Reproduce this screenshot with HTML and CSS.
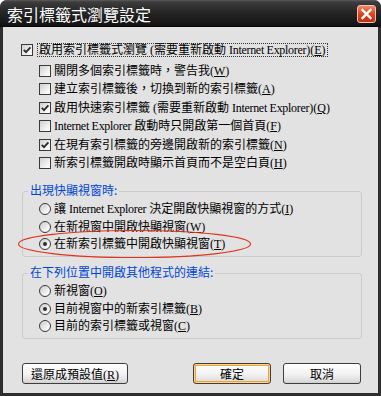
FILE: index.html
```html
<!DOCTYPE html>
<html lang="zh-Hant">
<head>
<meta charset="utf-8">
<title>索引標籤式瀏覽設定</title>
<link rel="stylesheet" href="styles.css">
</head>
<body>
<div class="window">
  <div class="titlebar">
    <span class="title">索引標籤式瀏覽設定</span>
    <span class="close"><svg width="13" height="12" viewBox="0 0 13 12"><path d="M2.5 2 L10.5 10 M10.5 2 L2.5 10" stroke="#fff" stroke-width="2.4" stroke-linecap="square"/></svg></span>
  </div>
  <div class="client">
    <div class="row top">
      <span class="cb"><svg width="10" height="10" viewBox="0 0 10 10"><path d="M1.8 4.8 L4 7.2 L8.4 2.4" fill="none" stroke="#2a2a2a" stroke-width="1.8"/></svg></span>
      <span class="label focus">啟用索引標籤式瀏覽 (需要重新啟動 <span class="lat">Internet Explorer</span>)(<u>E</u>)</span>
    </div>
    <div class="sub">
      <div class="row"><span class="cb"></span><span class="label">關閉多個索引標籤時，警告我(<u>W</u>)</span></div>
      <div class="row"><span class="cb"></span><span class="label">建立索引標籤後，切換到新的索引標籤(<u>A</u>)</span></div>
      <div class="row"><span class="cb"><svg width="10" height="10" viewBox="0 0 10 10"><path d="M1.8 4.8 L4 7.2 L8.4 2.4" fill="none" stroke="#2a2a2a" stroke-width="1.8"/></svg></span><span class="label">啟用快速索引標籤 (需要重新啟動 <span class="lat">Internet Explorer</span>)(<u>Q</u>)</span></div>
      <div class="row"><span class="cb"></span><span class="label"><span class="lat">Internet Explorer</span> 啟動時只開啟第一個首頁(<u>F</u>)</span></div>
      <div class="row"><span class="cb"><svg width="10" height="10" viewBox="0 0 10 10"><path d="M1.8 4.8 L4 7.2 L8.4 2.4" fill="none" stroke="#2a2a2a" stroke-width="1.8"/></svg></span><span class="label">在現有索引標籤的旁邊開啟新的索引標籤(<u>N</u>)</span></div>
      <div class="row"><span class="cb"></span><span class="label">新索引標籤開啟時顯示首頁而不是空白頁(<u>H</u>)</span></div>
    </div>
    <fieldset class="group g1">
      <legend>出現快顯視窗時:</legend>
      <div class="row"><span class="rb"></span><span class="label">讓 <span class="lat">Internet Explorer</span> 決定開啟快顯視窗的方式(<u>I</u>)</span></div>
      <div class="row"><span class="rb"></span><span class="label">在新視窗中開啟快顯視窗(<u>W</u>)</span></div>
      <div class="row"><span class="rb on"></span><span class="label">在新索引標籤中開啟快顯視窗(<u>T</u>)</span></div>
    </fieldset>
    <fieldset class="group g2">
      <legend>在下列位置中開啟其他程式的連結:</legend>
      <div class="row"><span class="rb"></span><span class="label">新視窗(<u>O</u>)</span></div>
      <div class="row"><span class="rb on"></span><span class="label">目前視窗中的新索引標籤(<u>B</u>)</span></div>
      <div class="row"><span class="rb"></span><span class="label">目前的索引標籤或視窗(<u>C</u>)</span></div>
    </fieldset>
    <div class="buttons">
      <button class="btn reset">還原成預設值(<u>R</u>)</button>
      <button class="btn ok">確定</button>
      <button class="btn cancel">取消</button>
    </div>
  </div>
  <svg class="mark" width="381" height="396" viewBox="0 0 381 396"><ellipse cx="134.5" cy="244" rx="116" ry="13.5" fill="none" stroke="#e0341c" stroke-width="1.2"/></svg>
</div>
</body>
</html>
```

FILE: styles.css
```css
* { box-sizing: border-box; }
html, body { margin: 0; padding: 0; background: #fff; }
body {
  font-family: "Liberation Serif", "Noto Sans CJK TC", serif;
  font-size: 12px;
  color: #000;
}
.window {
  position: relative;
  width: 381px;
  height: 396px;
  display: flex;
  flex-direction: column;
  background: #2e2e2e;
  border-radius: 7px 7px 0 0;
  overflow: hidden;
}
.titlebar {
  height: 27px;
  flex: none;
  display: flex;
  align-items: center;
  justify-content: space-between;
  padding: 0 5px 0 7px;
  background: linear-gradient(#5c5c5c 0, #3c3c3c 2px, #262626 12px, #141414 25px, #050505 27px);
}
.title {
  font-family: "Noto Sans CJK TC", sans-serif;
  font-size: 16px;
  line-height: 18px;
  color: #fff;
}
.close {
  width: 19px;
  height: 18px;
  border-radius: 3px;
  border: 1px solid #f3c2b2;
  background: linear-gradient(#f08a66, #d9461f 50%, #c03010);
  display: flex;
  align-items: center;
  justify-content: center;
}
.client {
  flex: 1;
  margin: 0 3px 3px;
  background: #e2e2e2;
  padding: 14px 16px 9px 18px;
  display: flex;
  flex-direction: column;
}
.row {
  display: flex;
  align-items: center;
  height: 18.5px;
  white-space: nowrap;
}
.row.top { height: 18px; margin-bottom: 2.5px; }
.sub { padding-left: 18px; }
.label { line-height: 14px; }
.lat { font-size: 12px; letter-spacing: -0.3px; }
.focus {
  border: 1px dotted #333;
  padding: 0 1px;
  line-height: 12px;
  margin-left: 1px;
}
.cb {
  width: 12px;
  height: 12px;
  flex: none;
  border: 1px solid #3a3a3a;
  background: linear-gradient(135deg, #cfcfcf, #f4f4f4 70%, #fff);
  margin-right: 3px;
  display: flex;
  align-items: center;
  justify-content: center;
}
.rb {
  width: 12px;
  height: 12px;
  flex: none;
  border-radius: 50%;
  border: 1px solid #3a3a3a;
  background: linear-gradient(135deg, #cbcbcb, #f4f4f4 70%, #fff);
  margin-right: 3px;
  display: flex;
  align-items: center;
  justify-content: center;
}
.rb.on::after {
  content: "";
  width: 4px;
  height: 4px;
  border-radius: 50%;
  background: #2e2e2e;
}
.group {
  margin: 10.5px 0 0 1px;
  padding: 0 0 2.75px 0;
  border: 1px solid #cbcbcb;
  border-radius: 3px;
  min-width: 0;
}
.group legend {
  margin-left: 5px;
  padding: 0 2px 3px;
  line-height: 14px;
  color: #0046d5;
  font-family: "Noto Sans CJK TC", sans-serif;
}
.group .row { height: 17.75px; padding-left: 16px; }
.g2 { margin-top: 8px; }
.buttons {
  margin-top: auto;
  margin-left: 1px;
  display: flex;
}
.btn {
  height: 21px;
  padding: 0;
  font-family: "Liberation Serif", "Noto Sans CJK TC", serif;
  font-size: 12px;
  color: #000;
  border: 1px solid #3e3e3e;
  border-radius: 3px;
  background: linear-gradient(#ffffff, #f2f2f2 55%, #dcdcdc 90%, #cfcfcf);
}
.reset { width: 106px; }
.ok { width: 78px; margin-left: auto; box-shadow: inset 0 0 0 1px #ffd28a, inset 0 0 0 2px #f0a43c; }
.cancel { width: 78px; margin-left: 12px; margin-right: 1px; }
.mark {
  position: absolute;
  left: 0;
  top: 0;
  pointer-events: none;
}
```
